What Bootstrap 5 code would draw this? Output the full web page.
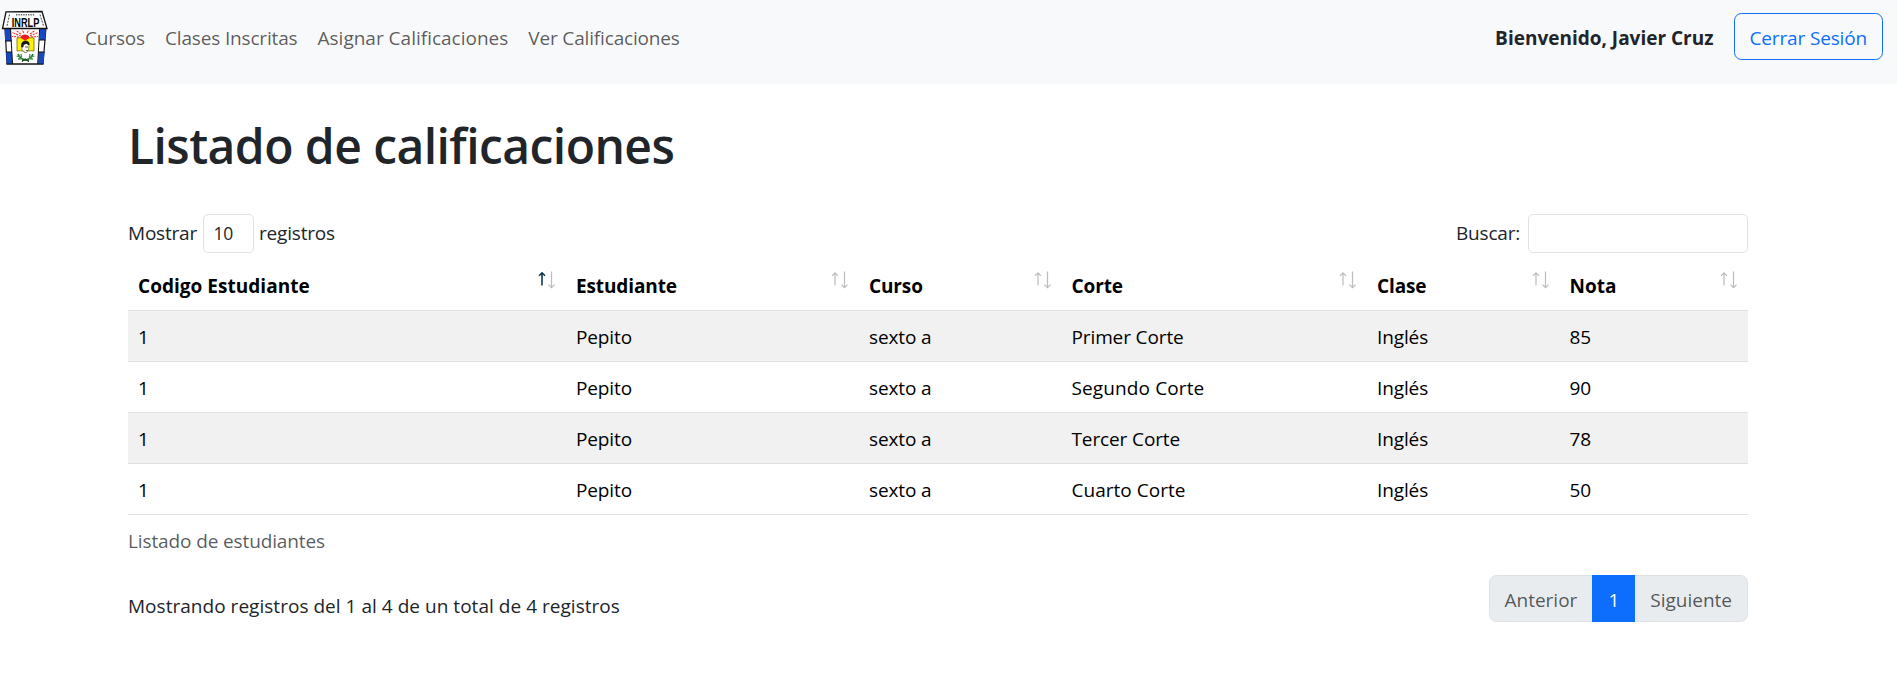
<!DOCTYPE html>
<html lang="es">
<head>
<meta charset="utf-8">
<meta name="viewport" content="width=device-width, initial-scale=1">
<title>Listado de calificaciones</title>
<link href="https://cdn.jsdelivr.net/npm/bootstrap@5.3.0/dist/css/bootstrap.min.css" rel="stylesheet">
<style>
html { font-size: 20px; }
body { font-family: "Open Sans", "Noto Sans", sans-serif; font-size: 19px; line-height: 30px; letter-spacing: -.12px; }
.topbar { height: 84px; background: #f8f9fa; padding: 0 14px 11px 0; }
.menu { gap: 20px; padding-left: 35px; letter-spacing: -.16px; }
.topbar .nav-link { color: rgba(0,0,0,.65); font-size: 19px; padding: 2px 0 0; white-space: nowrap; }
.topbar .nav-link.wide { letter-spacing: 0; }
.crest { width: 50px; height: 56px; flex-shrink: 0; }
.topbar .btn { font-size: 19px; line-height: 30px; letter-spacing: -.15px; padding: 8.5px 15px 6.5px; }
.welcome { letter-spacing: 0; padding-top: 2px; }
.wide { letter-spacing: .03px; }
.wider { letter-spacing: .12px; }
.page { width: 1620px; margin-left: 128px; }
.page h1 { font-size: 48px; line-height: 60px; font-weight: 600; letter-spacing: -.56px; margin: 32px 0 38px; }
.controls { letter-spacing: -.2px; }
.controls span { margin-top: -2px; }
.controls .len { width: 51px; height: 39px; font-size: 17.5px; padding: 0 0 0 10px; background-image: none; letter-spacing: -.3px; border-radius: 5px; margin: 0 5.5px 0 5.5px; }
.controls .finder { width: 220px; height: 39px; border-radius: 5px; margin-left: 8px; }
.grades { table-layout: fixed; margin: 7px 0 0; --bs-table-striped-bg: #f1f1f1; --bs-table-striped-color: #000; border-color: #dee2e6; }
.grades th, .grades td { padding: 11px 10px 9px; color: #000; }
.grades caption { padding: 11px 0 9px; color: rgba(33,37,41,.75); }
.c1 { width: 438px; } .c2 { width: 293px; } .c3 { width: 202.5px; } .c4 { width: 305.5px; } .c5 { width: 192.5px; } .c6 { width: 188.5px; }
.sorter { width: 17px; height: 18px; margin: 0 1px 0 0; fill: none; stroke: #bcbcbc; stroke-width: 1.2; }
.sorter .on { stroke: #12384f; stroke-width: 1.6; }
.info { padding-top: 26px; }
.pagination { margin: 10px 0 0; letter-spacing: 0; }
.pagination .page-link { font-size: 19px; line-height: 30px; padding: 8.5px 15px 6.5px; }
.pagination .disabled .page-link { background: #e9ecef; color: rgba(33,37,41,.75); }
</style>
</head>
<body>
<svg class="d-none">
  <symbol id="up" viewBox="0 0 17 18"><path d="M4 14.5V2M1 4.8 4 1.8 7 4.8"/></symbol>
  <symbol id="down" viewBox="0 0 17 18"><path d="M13.5 .5V16.5M10.5 13.7 13.5 16.7 16.5 13.7"/></symbol>
</svg>
<nav class="topbar d-flex align-items-center">
  <svg class="crest" viewBox="0 8 50 56" role="img" aria-label="INRLP">
    <path d="M5 26 7 63H43L46 26Z" fill="#fff" stroke="#111" stroke-width="1.2"/>
    <path d="M4.500 28H10.500L11.300 40H5.200ZM6 51H12L12.500 63H6.800ZM40 28H46L45.200 39H39.500ZM38.500 51H44.500L43.500 63H38Z" fill="#1748c4"/>
    <path d="M10.500 27 12.500 63M39.700 27 37.700 63M5 40H12M6 51H12M39 39H45.500M38.500 51H44.500M6.500 63H43.500" stroke="#111" fill="none"/>
    <path d="M6 10.800 42 10.500 47 27.500H2.500Z" fill="#fff" stroke="#111" stroke-width="1.3"/>
    <path d="M9.500 13.500 7 25M40 13.500 43.500 25" stroke="#444" stroke-dasharray="2 1.200" fill="none"/>
    <path d="M16 13.700H35" stroke="#666" stroke-width="1.600" stroke-dasharray="1.400 1"/>
    <text x="11.800" y="25.600" font-family="Liberation Sans" font-weight="700" font-size="13" textLength="27.500" lengthAdjust="spacingAndGlyphs" letter-spacing="0" fill="#000">INRLP</text>
    <path d="M21 35 12 31.500M21 33 16 29.500M24 32 22 29M27 32 29 29M30 33 35 29.500M30 35 38 31.500M19 36 12 35.500M31 36 38 35.500" stroke="#ee3b2f" stroke-width="1.100" stroke-dasharray="2.200 .8"/>
    <path d="M17 37Q25 36 25 38Q26 36 34 37V50Q26 49 25.500 52Q24 49 17 50Z" fill="#ffef00" stroke="#776c00" stroke-width=".8"/>
    <path d="M20.500 37Q21 33.500 25 33.500T29.500 37L25 39.500Z" fill="#ed1c16"/>
    <path d="M22 43Q23 40 26 40.500L29 43 28.500 49 26 52 22 49Z" fill="#fff" stroke="#555" stroke-width=".6"/>
    <path d="M21.500 46Q21 40 25.500 40Q29.500 40 29 44L26.500 42.500 23.500 43.500 23 46ZM25 46H28M26 49.500H28" fill="#151515" stroke="#151515" stroke-width=".7"/>
    <path d="M18 53Q20 59 29 59.500M33 53Q31 59 22 59.500" stroke="#26702f" stroke-width="1.600" fill="none"/>
    <path d="M16.500 55 20 56M18 58 22 57.500M34.500 55 31 56M33 58 29 57.500M21 53 21.500 56M30 53 29.500 56" stroke="#399344" stroke-width="1.300"/>
    <path d="M22 61 25 57.500 29 61" stroke="#222" stroke-width=".9" fill="none"/>
  </svg>
  <div class="menu nav flex-nowrap">
    <a class="nav-link" href="#">Cursos</a>
    <a class="nav-link" href="#">Clases Inscritas</a>
    <a class="nav-link wide" href="#">Asignar Calificaciones</a>
    <a class="nav-link" href="#">Ver Calificaciones</a>
  </div>
  <span class="welcome fw-bold text-nowrap ms-auto me-3">Bienvenido, Javier Cruz</span>
  <a class="btn btn-outline-primary text-nowrap" href="#">Cerrar Sesión</a>
</nav>
<main class="page">
  <h1>Listado de calificaciones</h1>
  <div class="controls d-flex justify-content-between">
    <label class="d-flex align-items-center"><span>Mostrar</span><select class="form-select len"><option>10</option></select><span>registros</span></label>
    <label class="d-flex align-items-center"><span>Buscar:</span><input type="search" class="form-control finder"></label>
  </div>
  <table class="table table-striped grades">
    <caption>Listado de estudiantes</caption>
    <thead><tr>
      <th class="c1 wide">Codigo Estudiante<svg class="sorter float-end"><use class="on" href="#up"/><use href="#down"/></svg></th>
      <th class="c2">Estudiante<svg class="sorter float-end"><use href="#up"/><use href="#down"/></svg></th>
      <th class="c3">Curso<svg class="sorter float-end"><use href="#up"/><use href="#down"/></svg></th>
      <th class="c4">Corte<svg class="sorter float-end"><use href="#up"/><use href="#down"/></svg></th>
      <th class="c5">Clase<svg class="sorter float-end"><use href="#up"/><use href="#down"/></svg></th>
      <th class="c6 wide">Nota<svg class="sorter float-end"><use href="#up"/><use href="#down"/></svg></th>
    </tr></thead>
    <tbody>
      <tr><td>1</td><td>Pepito</td><td>sexto a</td><td>Primer Corte</td><td>Inglés</td><td>85</td></tr>
      <tr><td>1</td><td>Pepito</td><td>sexto a</td><td class="wider">Segundo Corte</td><td>Inglés</td><td>90</td></tr>
      <tr><td>1</td><td>Pepito</td><td>sexto a</td><td>Tercer Corte</td><td>Inglés</td><td>78</td></tr>
      <tr><td>1</td><td>Pepito</td><td>sexto a</td><td class="wide">Cuarto Corte</td><td>Inglés</td><td>50</td></tr>
    </tbody>
  </table>
  <div class="d-flex justify-content-between">
    <div class="info wide">Mostrando registros del 1 al 4 de un total de 4 registros</div>
    <ul class="pagination">
      <li class="page-item disabled"><a class="page-link">Anterior</a></li>
      <li class="page-item active"><a class="page-link" href="#">1</a></li>
      <li class="page-item disabled"><a class="page-link">Siguiente</a></li>
    </ul>
  </div>
</main>
<script src="https://cdn.jsdelivr.net/npm/bootstrap@5.3.0/dist/js/bootstrap.bundle.min.js"></script>
</body>
</html>
